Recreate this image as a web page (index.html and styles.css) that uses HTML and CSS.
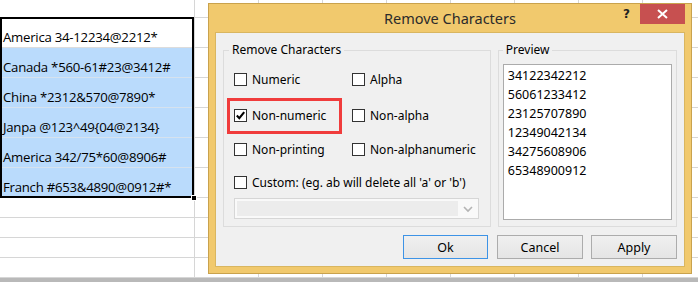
FILE: index.html
```html
<!DOCTYPE html>
<html>
<head>
<meta charset="utf-8">
<link rel="stylesheet" href="styles.css">
</head>
<body>
<div class="app">
  <div class="sheet">
    <div class="col col-a">
      <div class="cell head"></div>
      <div class="sel">
        <div class="srow first">America 34-12234@2212*</div>
        <div class="srow blue">Canada *560-61#23@3412#</div>
        <div class="srow blue">China *2312&amp;570@7890*</div>
        <div class="srow blue">Janpa @123^49{04@2134}</div>
        <div class="srow blue">America 342/75*60@8906#</div>
        <div class="srow blue last">Franch #653&amp;4890@0912#*</div>
        <div class="handle"></div>
      </div>
      <div class="cell low"></div>
      <div class="cell low"></div>
      <div class="cell low"></div>
      <div class="cell low"></div>
    </div>
    <div class="col"><div class="cell c0"></div><div class="cell mid"></div><div class="cell mid"></div><div class="cell mid"></div><div class="cell mid"></div><div class="cell mid"></div><div class="cell mid"></div><div class="cell low"></div><div class="cell low"></div><div class="cell low"></div><div class="cell low"></div></div>
    <div class="col"><div class="cell c0"></div><div class="cell mid"></div><div class="cell mid"></div><div class="cell mid"></div><div class="cell mid"></div><div class="cell mid"></div><div class="cell mid"></div><div class="cell low"></div><div class="cell low"></div><div class="cell low"></div><div class="cell low"></div></div>
    <div class="col"><div class="cell c0"></div><div class="cell mid"></div><div class="cell mid"></div><div class="cell mid"></div><div class="cell mid"></div><div class="cell mid"></div><div class="cell mid"></div><div class="cell low"></div><div class="cell low"></div><div class="cell low"></div><div class="cell low"></div></div>
    <div class="col"><div class="cell c0"></div><div class="cell mid"></div><div class="cell mid"></div><div class="cell mid"></div><div class="cell mid"></div><div class="cell mid"></div><div class="cell mid"></div><div class="cell low"></div><div class="cell low"></div><div class="cell low"></div><div class="cell low"></div></div>
    <div class="col"><div class="cell c0"></div><div class="cell mid"></div><div class="cell mid"></div><div class="cell mid"></div><div class="cell mid"></div><div class="cell mid"></div><div class="cell mid"></div><div class="cell low"></div><div class="cell low"></div><div class="cell low"></div><div class="cell low"></div></div>
    <div class="col"><div class="cell c0"></div><div class="cell mid"></div><div class="cell mid"></div><div class="cell mid"></div><div class="cell mid"></div><div class="cell mid"></div><div class="cell mid"></div><div class="cell low"></div><div class="cell low"></div><div class="cell low"></div><div class="cell low"></div></div>
    <div class="col"><div class="cell c0"></div><div class="cell mid"></div><div class="cell mid"></div><div class="cell mid"></div><div class="cell mid"></div><div class="cell mid"></div><div class="cell mid"></div><div class="cell low"></div><div class="cell low"></div><div class="cell low"></div><div class="cell low"></div></div>
    <div class="col"><div class="cell c0"></div><div class="cell mid"></div><div class="cell mid"></div><div class="cell mid"></div><div class="cell mid"></div><div class="cell mid"></div><div class="cell mid"></div><div class="cell low"></div><div class="cell low"></div><div class="cell low"></div><div class="cell low"></div></div>
  </div>
  <div class="bar"></div>

  <div class="dialog">
    <div class="titlebar">
      <div></div>
      <div class="title">Remove Characters</div>
      <div class="controls">
        <div class="help">?</div>
        <div class="close">
          <svg width="11" height="10" viewBox="0 0 11 10"><path d="M1 1 L10 9 M10 1 L1 9" stroke="#fff" stroke-width="2" fill="none"/></svg>
        </div>
      </div>
    </div>
    <div class="client">
      <div class="groups">
        <div class="group left-group">
          <div class="glabel">Remove Characters</div>
          <div class="opts">
            <div class="opt"><span class="box"></span>Numeric</div>
            <div class="opt"><span class="box"></span>Alpha</div>
            <div class="opt"><span class="box"><svg width="11" height="11" viewBox="0 0 11 11"><path d="M1.8 5.6 L4.3 8.2 L9.2 2.2" stroke="#000" stroke-width="2.1" fill="none"/></svg></span>Non-numeric</div>
            <div class="opt"><span class="box"></span>Non-alpha</div>
            <div class="opt"><span class="box"></span>Non-printing</div>
            <div class="opt"><span class="box"></span>Non-alphanumeric</div>
            <div class="opt wide"><span class="box"></span>Custom: (eg. ab will delete all 'a' or 'b')</div>
          </div>
          <div class="combo">
            <div class="field"></div>
            <svg class="chev" width="10" height="7" viewBox="0 0 10 7"><path d="M1 1 L5 5 L9 1" stroke="#b4b4b4" stroke-width="1.6" fill="none"/></svg>
          </div>
          <div class="highlight"></div>
        </div>
        <div class="group prev-group">
          <div class="glabel">Preview</div>
          <div class="list">
            <div>34122342212</div>
            <div>56061233412</div>
            <div>23125707890</div>
            <div>12349042134</div>
            <div>34275608906</div>
            <div>65348900912</div>
          </div>
        </div>
      </div>
      <div class="buttons">
        <div class="btn ok">Ok</div>
        <div class="btn cancel">Cancel</div>
        <div class="btn apply">Apply</div>
      </div>
    </div>
  </div>
</div>
</body>
</html>
```

FILE: styles.css
```css
* { box-sizing: border-box; }
html, body { margin: 0; padding: 0; background: #fff; }
.app {
  position: relative;
  width: 698px;
  height: 282px;
  overflow: hidden;
  font-family: "Noto Sans", "Open Sans", sans-serif;
}
.sheet {
  display: flex;
  height: 278px;
  overflow: hidden;
}
.col {
  width: 64px;
  flex: none;
  border-right: 1px solid #d6d6d6;
  display: flex;
  flex-direction: column;
}
.col-a { width: 195px; }
.cell { border-bottom: 1px solid #d6d6d6; flex: none; }
.cell.head { height: 17px; border-bottom: none; }
.cell.c0 { height: 18px; }
.cell.mid { height: 30px; }
.cell.low { height: 20px; }
.sel {
  position: relative;
  width: 194px;
  height: 181px;
  border: 2px solid #000;
  flex: none;
  display: flex;
  flex-direction: column;
  font-family: "Open Sans", sans-serif;
  font-size: 13.2px;
  letter-spacing: -0.25px;
  color: #000;
}
.srow {
  height: 30px;
  display: flex;
  align-items: flex-end;
  line-height: 15px;
  padding: 0 0 2px 1px;
  border-bottom: 1px solid #dcdcdc;
  flex: none;
  white-space: nowrap;
}
.srow.first { height: 29px; background: #fff; }
.srow.blue { background: #badbfc; border-bottom-color: #d6e2ee; }
.srow.last { height: 28px; border-bottom: none; padding-bottom: 1px; }
.handle {
  position: absolute;
  right: -5px;
  bottom: -5px;
  width: 6px;
  height: 6px;
  background: #000;
  border: 1px solid #fff;
}
.bar { height: 4px; background: #b9b9b9; }

.dialog {
  position: absolute;
  left: 208px;
  top: 3px;
  width: 484px;
  height: 271px;
  border: 1px solid #c9a24d;
  background: #f1c96d;
  padding: 0 6px 6px 6px;
  display: flex;
  flex-direction: column;
}
.titlebar {
  height: 28px;
  flex: none;
  display: grid;
  grid-template-columns: 1fr auto 1fr;
  align-items: start;
}
.title {
  font-family: "Noto Sans", sans-serif;
  font-size: 14.5px;
  color: #2b2b2b;
  line-height: 28px;
}
.controls {
  display: flex;
  justify-content: flex-end;
  align-items: flex-start;
}
.help {
  width: 28px;
  height: 20px;
  text-align: center;
  font-family: "DejaVu Sans", sans-serif;
  font-weight: bold;
  font-size: 12px;
  line-height: 20px;
  color: #222;
  padding-left: 1px;
}
.close {
  width: 45px;
  height: 20px;
  background: #c75050;
  display: flex;
  align-items: center;
  justify-content: center;
}
.client {
  flex: 1;
  background: #f0f0f0;
  border: 1px solid #d9b660;
  padding: 17px 7px 7px 7px;
  display: flex;
  flex-direction: column;
  font-size: 12px;
  color: #000;
}
.groups {
  display: flex;
  gap: 7px;
  height: 177px;
  flex: none;
}
.group {
  position: relative;
  border: 1px solid #dcdcdc;
  height: 177px;
}
.left-group { width: 269px; padding: 0 0 6px 10px; }
.prev-group { width: 180px; padding: 0 0 6px 4px; }
.glabel {
  margin-top: -9px;
  margin-left: -5px;
  width: fit-content;
  padding: 0 3px;
  background: #f0f0f0;
  line-height: 16px;
  height: 16px;
  white-space: nowrap;
}
.prev-group .glabel { margin-left: 0; }
.opts {
  margin-top: 12px;
  display: grid;
  grid-template-columns: 118px 1fr;
  grid-template-rows: 36px 34px 33px 25px;
  align-items: start;
}
.opt {
  height: 18px;
  display: flex;
  align-items: center;
  white-space: nowrap;
}
.opt.wide { grid-column: 1 / span 2; }
.box {
  width: 13px;
  height: 13px;
  border: 1px solid #333;
  background: #fff;
  margin-right: 5px;
  flex: none;
  display: flex;
  align-items: center;
  justify-content: center;
}
.combo {
  width: 245px;
  height: 21px;
  border: 1px solid #d6d6d6;
  background: #f9f9f9;
  display: flex;
  align-items: center;
  padding: 0 5px 0 2px;
  justify-content: space-between;
}
.field {
  width: 221px;
  height: 15px;
  background: #ececec;
}
.chev { margin-top: 1px; }
.highlight {
  position: absolute;
  left: 3px;
  top: 47px;
  width: 115px;
  height: 36px;
  border: 3px solid #f03c3c;
}
.list {
  margin-top: 6px;
  width: 169px;
  height: 156px;
  background: #fff;
  border: 1px solid #ababab;
  padding: 2px 0 0 4px;
  line-height: 18.9px;
  font-size: 12.5px;
}
.buttons {
  margin-top: 8px;
  display: flex;
  justify-content: flex-end;
  gap: 8px;
}
.btn {
  height: 24px;
  width: 86px;
  border: 1px solid #acacac;
  background: linear-gradient(#f0f0f0, #e5e5e5);
  display: flex;
  align-items: center;
  justify-content: center;
  font-size: 12.5px;
}
.btn.ok { width: 85px; border-color: #3d93e6; margin-right: 1px; }
```
